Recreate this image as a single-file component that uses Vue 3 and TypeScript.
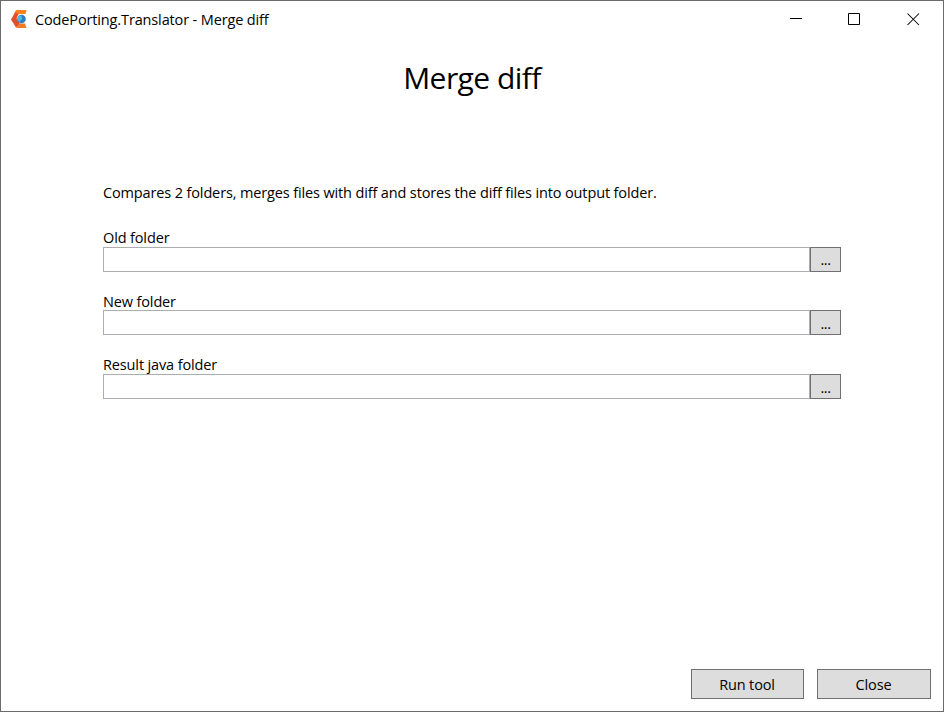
<script setup lang="ts">
import { ref } from 'vue'

interface FolderField {
  id: string
  label: string
  value: string
}

const fields = ref<FolderField[]>([
  { id: 'old', label: 'Old folder', value: '' },
  { id: 'new', label: 'New folder', value: '' },
  { id: 'result', label: 'Result java folder', value: '' },
])
</script>

<template>
  <div class="window">
    <header class="titlebar">
      <svg class="logo" width="16" height="18" viewBox="0 0 16 18">
        <path d="M5 0H15.500L14.500 4H8L5 6.500L3.500 3Z" fill="#f58220" />
        <path d="M4 2.500L7.500 4L5.500 8.500L9 14L5 17.500L0 9.500Z" fill="#e2502b" />
        <path d="M5 18L8.500 13.500H14L15.500 18Z" fill="#f47b25" />
        <circle cx="10.500" cy="9" r="4.300" fill="#2b7fc3" />
        <path d="M7.500 6L10.500 5.500L11 9L8.500 12L6.500 10Z" fill="#4fb9ea" />
      </svg>
      <span class="caption">CodePorting.Translator - Merge diff</span>
      <div class="controls">
        <svg width="13" height="13" viewBox="0 0 13 13"><path d="M0 5.500H12" /></svg>
        <svg width="13" height="13" viewBox="0 0 13 13"><path d="M.5 .5H11.500V11.500H.5Z" /></svg>
        <svg class="cross" width="13" height="13" viewBox="0 0 13 13"><path d="M.5 .5L12 12M12 .5L.5 12" /></svg>
      </div>
    </header>
    <h1>Merge diff</h1>
    <main>
      <p class="description">Compares 2 folders, merges files with diff and stores the diff files into output folder.</p>
      <div v-for="field in fields" :key="field.id" class="field" :class="field.id">
        <label :for="field.id">{{ field.label }}</label>
        <div class="picker">
          <input :id="field.id" v-model="field.value" type="text" />
          <button type="button" class="browse"><span>...</span></button>
        </div>
      </div>
    </main>
    <footer>
      <button type="button" class="run">Run tool</button>
      <button type="button" class="close">Close</button>
    </footer>
  </div>
</template>

<style>
body {
  margin: 0;
  background: #fff;
}
</style>

<style scoped>
* {
  box-sizing: border-box;
}
.window {
  width: 944px;
  height: 712px;
  border: 1px solid #6b6b6b;
  background: #fff;
  color: #000;
  display: flex;
  flex-direction: column;
  font: 14.5px/20px "Open Sans", "Noto Sans", sans-serif;
  letter-spacing: -0.135px;
  font-variant-ligatures: none;
}
.titlebar {
  height: 36px;
  flex: none;
  display: flex;
  align-items: center;
  padding: 0 23px 0 10px;
}
.logo {
  margin-right: 8px;
}
.caption {
  padding-top: 2px;
}
.controls {
  margin-left: auto;
  display: flex;
  gap: 45px;
}
.controls svg {
  fill: none;
  stroke: #000;
  stroke-width: 1;
}
.controls .cross {
  margin-left: 1px;
  stroke-width: 1.05;
}
h1 {
  margin: 20px 0 0;
  height: 42px;
  font-size: 30px;
  line-height: 42px;
  font-weight: 400;
  letter-spacing: -0.55px;
  text-align: center;
}
main {
  padding: 84px 102px 0;
  display: flex;
  flex-direction: column;
}
.description {
  margin: 0 0 26px;
}
.field {
  height: 64px;
}
.field.old {
  height: 63px;
}
label {
  display: block;
  height: 18px;
  line-height: 18px;
}
.field.new label {
  line-height: 20px;
}
.picker {
  display: flex;
}
input {
  flex: 1;
  min-width: 0;
  height: 25px;
  margin: 0;
  padding: 0 4px;
  border: 1px solid #abadb3;
  outline: none;
  font: inherit;
}
button {
  padding: 0;
  border: 1px solid #707070;
  border-radius: 0;
  background: #ddd;
  color: #000;
  font: inherit;
  letter-spacing: inherit;
}
.browse {
  width: 31px;
  height: 25px;
  letter-spacing: -0.5px;
}
.field.new .browse,
.field.result .browse {
  padding-top: 2px;
}
footer {
  margin-top: auto;
  padding: 0 12px 12px;
  display: flex;
  justify-content: flex-end;
  gap: 13px;
}
footer button {
  height: 30px;
  padding: 1px 1px 0 0;
}
.run {
  width: 113px;
}
.close {
  width: 114px;
}
</style>
